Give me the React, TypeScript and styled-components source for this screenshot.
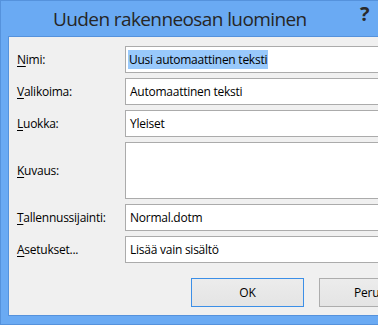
import { Fragment } from 'react';
import { createGlobalStyle, styled } from 'styled-components';

const GlobalStyle = createGlobalStyle`
  html, body {
    margin: 0;
    padding: 0;
    background: #6aaaf3;
  }
  * {
    box-sizing: border-box;
  }
`;

const FRAME = '#6aaaf3';
const FRAME_EDGE = '#5592dc';

const Window = styled.div`
  width: 378px;
  height: 325px;
  overflow: hidden;
  background: ${FRAME};
  border-left: 1px solid ${FRAME_EDGE};
  border-top: 1px solid ${FRAME_EDGE};
  border-bottom: 1px solid ${FRAME_EDGE};
  font-family: 'Open Sans', 'Noto Sans', sans-serif;
  display: flex;
  flex-direction: column;
`;

const TitleBar = styled.div`
  height: 35px;
  flex: none;
  display: flex;
  align-items: flex-start;
  padding-left: 52px;
  position: relative;
`;

const Title = styled.div`
  margin-top: 5px;
  font-size: 19px;
  letter-spacing: -0.6px;
  color: #262626;
  line-height: 26px;
`;

const HelpButton = styled.div`
  position: absolute;
  left: 359px;
  top: 1px;
  font-size: 20px;
  font-weight: 700;
  color: #2a2a2a;
  line-height: 24px;
`;

const Client = styled.div`
  margin-left: 7px;
  width: 480px;
  height: 280px;
  flex: none;
  background: #f0f0f0;
  border-left: 1px solid ${FRAME_EDGE};
  border-top: 1px solid ${FRAME_EDGE};
  border-bottom: 1px solid ${FRAME_EDGE};
  padding: 9px 0 0 8px;
  display: flex;
  flex-direction: column;
`;

const Form = styled.div`
  display: grid;
  grid-template-columns: 108px 1fr;
  row-gap: 5px;
`;

const Label = styled.div`
  display: flex;
  align-items: center;
  font-size: 12px;
  letter-spacing: -0.25px;
  color: #000;
`;

const Key = styled.span`
  text-decoration: underline;
  text-underline-offset: 2px;
`;

const Field = styled.div<{ $tall?: boolean }>`
  height: ${({ $tall }) => ($tall ? '57px' : '27px')};
  background: #fff;
  border: 1px solid #ababab;
  padding: ${({ $tall }) => ($tall ? '0' : '0 0 0 2px')};
  display: flex;
  align-items: ${({ $tall }) => ($tall ? 'flex-start' : 'center')};
  font-size: 12px;
  letter-spacing: -0.25px;
  color: #000;
`;

const Selected = styled.span`
  background: #99c9fb;
  padding: 1px 1px;
  line-height: 17px;
`;

const Plain = styled.span`
  padding-left: 2px;
`;

const ButtonRow = styled.div`
  display: flex;
  gap: 15px;
  padding-left: 174px;
  margin-top: 15px;
`;

const Button = styled.div<{ $default?: boolean }>`
  width: 113px;
  height: 29px;
  flex: none;
  display: flex;
  align-items: center;
  justify-content: center;
  border: 1px solid ${({ $default }) => ($default ? '#3c8fe7' : '#adadad')};
  background: linear-gradient(#ececec, #e4e4e4);
  font-size: 12px;
  letter-spacing: -0.2px;
  color: #000;
`;

const rows: { key: string; rest: string; value: string; tall?: boolean; selected?: boolean }[] = [
  { key: 'N', rest: 'imi:', value: 'Uusi automaattinen teksti', selected: true },
  { key: 'V', rest: 'alikoima:', value: 'Automaattinen teksti' },
  { key: 'L', rest: 'uokka:', value: 'Yleiset' },
  { key: 'K', rest: 'uvaus:', value: '', tall: true },
  { key: 'T', rest: 'allennussijainti:', value: 'Normal.dotm' },
  { key: 'A', rest: 'setukset...', value: 'Lisää vain sisältö' },
];

export default function App() {
  return (
    <>
      <GlobalStyle />
      <Window>
        <TitleBar>
          <Title>Uuden rakenneosan luominen</Title>
          <HelpButton>?</HelpButton>
        </TitleBar>
        <Client>
          <Form>
            {rows.map((r) => (
              <Fragment key={r.key}>
                <Label>
                  <Key>{r.key}</Key>
                  {r.rest}
                </Label>
                <Field $tall={r.tall}>
                  {r.selected ? <Selected>{r.value}</Selected> : <Plain>{r.value}</Plain>}
                </Field>
              </Fragment>
            ))}
          </Form>
          <ButtonRow>
            <Button $default>OK</Button>
            <Button>Peruuta</Button>
          </ButtonRow>
        </Client>
      </Window>
    </>
  );
}
